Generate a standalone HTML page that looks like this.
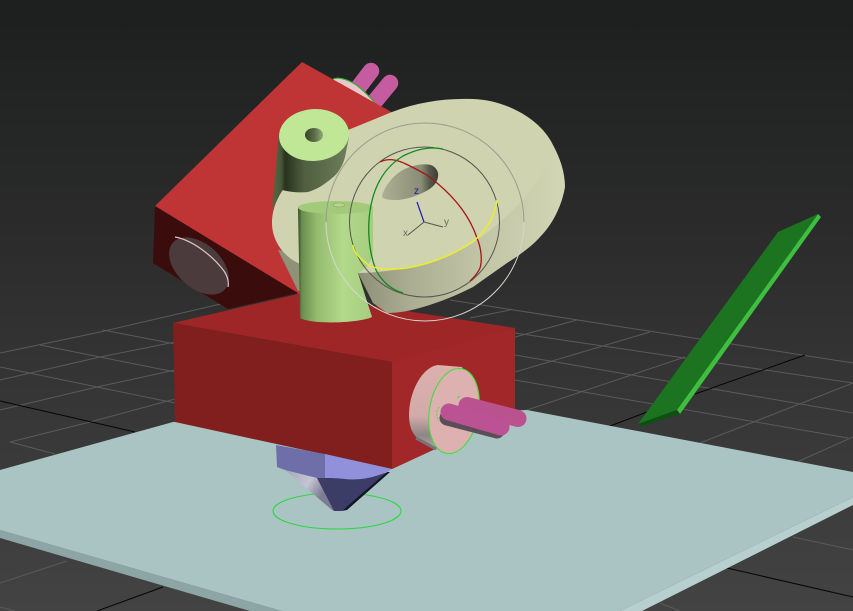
<!DOCTYPE html>
<html>
<head>
<meta charset="utf-8">
<style>
html,body{margin:0;padding:0;background:#2e2e2e}
svg{display:block}
text{font-family:"Liberation Sans",sans-serif}
</style>
</head>
<body>
<svg width="853" height="611" viewBox="0 0 853 611" xmlns="http://www.w3.org/2000/svg">
<defs>
<linearGradient id="bg" x1="0" y1="0" x2="0" y2="1">
<stop offset="0" stop-color="#1d1f1f"/><stop offset=".35" stop-color="#2a2a2a"/><stop offset=".65" stop-color="#363636"/><stop offset="1" stop-color="#434343"/>
</linearGradient>
<linearGradient id="cyl" x1="298" y1="0" x2="373" y2="0" gradientUnits="userSpaceOnUse">
<stop offset="0" stop-color="#2f4a22"/><stop offset=".05" stop-color="#6a8c4e"/><stop offset=".25" stop-color="#94bb6f"/><stop offset=".6" stop-color="#b2da8a"/><stop offset="1" stop-color="#a6cc80"/>
</linearGradient>
<linearGradient id="cyl2" x1="272" y1="0" x2="349" y2="0" gradientUnits="userSpaceOnUse">
<stop offset="0" stop-color="#556840"/><stop offset=".12" stop-color="#47583a"/><stop offset=".17" stop-color="#28321e"/><stop offset=".42" stop-color="#505f3f"/><stop offset="1" stop-color="#6e7f5b"/>
</linearGradient>
<linearGradient id="side" x1="360" y1="0" x2="565" y2="0" gradientUnits="userSpaceOnUse">
<stop offset="0" stop-color="#8e9176"/><stop offset=".25" stop-color="#abae92"/><stop offset=".6" stop-color="#c2c5a6"/><stop offset="1" stop-color="#d3d6b4"/>
</linearGradient>
<linearGradient id="hole" x1="382" y1="0" x2="438" y2="0" gradientUnits="userSpaceOnUse">
<stop offset="0" stop-color="#aeb095"/><stop offset=".7" stop-color="#8a8d75"/><stop offset=".85" stop-color="#55584a"/><stop offset="1" stop-color="#3c3e33"/>
</linearGradient>
<linearGradient id="smallhole" x1="305" y1="0" x2="324" y2="0" gradientUnits="userSpaceOnUse">
<stop offset="0" stop-color="#36432a"/><stop offset=".5" stop-color="#5c6e48"/><stop offset="1" stop-color="#9aad80"/>
</linearGradient>
<linearGradient id="drum" x1="0" y1="366" x2="0" y2="450" gradientUnits="userSpaceOnUse">
<stop offset="0" stop-color="#dbb1ae"/><stop offset=".6" stop-color="#d2aaa8"/><stop offset=".82" stop-color="#8f8585"/><stop offset="1" stop-color="#b9aaa9"/>
</linearGradient>
<linearGradient id="cone" x1="285" y1="470" x2="322" y2="495" gradientUnits="userSpaceOnUse">
<stop offset="0" stop-color="#a5a5b4"/><stop offset=".6" stop-color="#c4c4d2"/><stop offset="1" stop-color="#7c7c92"/>
</linearGradient>
</defs>

<rect width="853" height="611" fill="url(#bg)"/>

<g stroke="#5a5a5a" stroke-width="1" fill="none">
<path d="M0 353L100 332L225 303M0 380L100 357L175 342M0 410L97 387L175 370M10 442L90 422L175 399M103 330L175 344M40 345L175 372M0 367L175 403M10 442L55 454"/>
<path d="M0 583L67 561M0 607L15 611"/>
<path d="M450 300L853 363M515 333L853 383M515 355L853 413M515 380L848 438"/>
<path d="M470 318L510 310M515 337L577 320M515 372L650 332M527 410L685 357M700 443L853 383M797 462L853 437"/>
<path d="M793 537L853 550M660 603L680 611"/>
</g>
<g stroke="#050505" stroke-width="1" fill="none">
<path d="M0 401L135 432M610 426L647 412M695 394L805 355M727 568L853 597M97 611L163 587"/>
</g>

<!-- plate -->
<polygon points="0,530 0,538 250,611 282,611" fill="#8ea5a5"/>
<polygon points="853,497 853,505 642,611 620,611" fill="#b8cfcf"/>
<polygon points="173,422 527,410 853,472 853,497 620,611 282,611 0,530 0,470" fill="#aac4c4"/>

<!-- green slab -->
<polygon points="778,232 818,214 677,410 638,424" fill="#1c7320"/>
<polygon points="818,214 821,217 680,414 677,410" fill="#3fbf3f"/>
<polygon points="677,410 680,414 641,427 638,424" fill="#0f4f12"/>

<!-- upper pegs, back disc -->
<path d="M358 88L371 71" stroke="#c65ca0" stroke-width="16.500" stroke-linecap="round" fill="none"/>
<path d="M376 100L390 83" stroke="#c65ca0" stroke-width="16.500" stroke-linecap="round" fill="none"/>
<path d="M333 79C338 77 346 79 353 83C360 87 368 95 375 103L350 112Z" fill="#e8c8c8"/>
<path d="M333 79C338 77 346 79 353 83C360 87 368 95 375 103" fill="none" stroke="#35b035" stroke-width="1.200"/>

<!-- upper red block -->
<polygon points="302,62 155,206 298,294 345,290 420,128" fill="#bf3535"/>
<polygon points="155,206 153,263 228,309 298,293" fill="#3a0c0c"/>
<ellipse cx="199" cy="266" rx="35" ry="22" transform="rotate(42 199 266)" fill="#4b3b3d"/>
<path d="M175 237C192 240 212 255 224 271C228 277 229 283 228 287" fill="none" stroke="#e0c4c6" stroke-width="1.200"/>

<!-- lower red block -->
<polygon points="173,323 298,294 515,328 515,412 392,469 392,362" fill="#9f2627"/>
<polygon points="392,362 515,328 515,412 392,469" fill="#a22728"/>
<polygon points="173,323 392,362 392,469 175,422" fill="#801f1d"/>

<!-- disc side -->
<path d="M278 250L298 291L320 290L345 260Z" fill="#8f9278"/>
<path d="M553 145C560 158 565 172 565 187C562 205 553 224 540 237C530 248 518 256 507 263L473 287C455 296 440 302 423 307C410 311 398 313 387 313L373 303L358 273L450 230Z" fill="url(#side)"/>
<!-- disc top -->
<path d="M392 112C418 102 445 98 473 99C505 100 540 118 553 145C548 175 520 210 473 243C450 257 430 263 407 268C390 271 372 273 358 273C335 274 315 271 298 263C283 256 272 240 272 223C272 210 277 198 283 190L348 130Z" fill="#cfd3b0"/>
<!-- disc hole -->
<path d="M382 196C385 184 398 170 410 167C418 164 426 164 431 165C436 167 439 172 438 177C437 183 433 187 428 190C418 196 405 200 396 200C388 200 382 199 382 196Z" fill="url(#hole)"/>

<!-- back cylinder -->
<path d="M279 133L272 210L282 190C290 192 300 193 308 192C318 189 325 184 332 178C338 174 343 165 345 157L349 137Z" fill="url(#cyl2)"/>
<ellipse cx="314" cy="135" rx="35" ry="26" transform="rotate(-4 314 135)" fill="#bfe796"/>
<ellipse cx="314" cy="135" rx="9" ry="7" fill="url(#smallhole)"/>

<!-- front cylinder -->
<path d="M298 207L373 207L373 253C372 262 365 270 358 273L372 317C360 323 312 325 300 318Z" fill="url(#cyl)"/>
<ellipse cx="335.500" cy="207.500" rx="37.500" ry="6.500" fill="#a3ca7b"/>
<ellipse cx="339" cy="205" rx="6" ry="2" fill="#b5d690" stroke="#8aa968" stroke-width=".6"/>

<!-- gizmo circles -->
<path d="M326 222A99 99 0 0 1 524 222" fill="none" stroke="#9a9c90" stroke-width="1"/>
<path d="M524 222A99 99 0 0 1 326 222" fill="none" stroke="#d6d6d0" stroke-width="1"/>
<circle cx="424.500" cy="222" r="75" fill="none" stroke="#55574f" stroke-width="1"/>
<path d="M380 162C388 158 396 159 408 165C420 171 430 176 437 183C455 198 470 217 477 238C482 250 482 262 480 268C477 275 473 278 470 281" fill="none" stroke="#a81414" stroke-width="1.300"/>
<path d="M443 149C428 146 415 150 403 156C385 167 375 185 371 205C367 225 368 250 376 270C382 282 392 290 403 293" fill="none" stroke="#0f8a1e" stroke-width="1.300"/>
<path d="M497 200C495 215 488 228 477 238C460 252 435 263 407 268C390 270 372 270 365 262C358 257 353 250 353 245" fill="none" stroke="#ecec30" stroke-width="1.500"/>
<!-- axes -->
<path d="M424 222L417 202" stroke="#1b1bb0" stroke-width="1.200"/>
<path d="M424 222L408 235" stroke="#55574f" stroke-width="1"/>
<path d="M424 222L443 227" stroke="#55574f" stroke-width="1"/>
<text x="414" y="194" font-size="10" fill="#1b1bb0">z</text>
<text x="444" y="225" font-size="10" fill="#6a6c60">y</text>
<text x="403" y="236" font-size="10" fill="#6a6c60">x</text>

<!-- side drum -->
<path d="M438 365C422 367 409 392 409 415C409 426 412 433 417 438L436 450L455 452L478 410L462 367Z" fill="url(#drum)"/>
<path d="M416 438L436 449" stroke="#77737a" stroke-width="3" fill="none"/>
<ellipse cx="454" cy="411" rx="24.500" ry="43" transform="rotate(10 454 411)" fill="#dcb1af" stroke="#3fe03f" stroke-width="1.100"/>
<path d="M439 407C436 411 436 417 439 421" fill="none" stroke="#3fe03f" stroke-width="1" stroke-dasharray="2 1.500"/>
<path d="M457 398L460 396" fill="none" stroke="#3fe03f" stroke-width="1"/>
<!-- pegs -->
<path d="M467 405.500L518 418.500" stroke="#b9528f" stroke-width="17" stroke-linecap="round" fill="none"/>
<path d="M447 418L497 431" stroke="#5b4e58" stroke-width="15" stroke-linecap="round" fill="none"/>
<path d="M449 412L501 427" stroke="#bb5293" stroke-width="17" stroke-linecap="round" fill="none"/>

<!-- nozzle -->
<ellipse cx="337" cy="511" rx="64" ry="18" fill="none" stroke="#2fd640" stroke-width="1.100"/>
<polygon points="285,470 317,478 335,511 332,510" fill="url(#cone)"/>
<polygon points="317,478 387,473 344,509 341,511 334,511" fill="#3c3d66"/>
<path d="M387 472L344 509L341 511L347 510L390 472Z" fill="#151528"/>
<polygon points="276,445 325,454 325,478 317,478 305,475 285,470 277,467" fill="#6e6fa8"/>
<path d="M325 454L392 469L387 472C378 476 362 481 345 479C335 478 330 478 325 478Z" fill="#9091da"/>
</svg>
</body>
</html>
